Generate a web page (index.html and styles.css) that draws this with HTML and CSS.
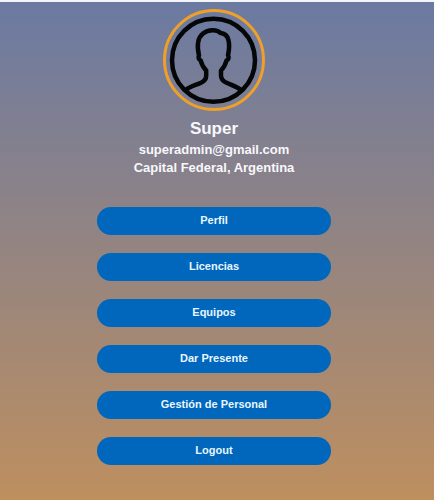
FILE: index.html
```html
<!DOCTYPE html>
<html lang="es">
<head>
<meta charset="utf-8">
<meta name="viewport" content="width=device-width, initial-scale=1">
<title>Perfil</title>
<link rel="stylesheet" href="styles.css">
</head>
<body>
<main class="page">
  <header class="profile">
    <svg class="avatar" viewBox="0 0 102 102" role="img" aria-label="Avatar">
      <circle class="ring" cx="51" cy="51" r="49.5"/>
      <g class="figure">
        <circle cx="50.5" cy="51.3" r="41.5"/>
        <path d="M22.7 81C27 77.5 33 76 38 73.7C42 72 43.2 70 43.2 66.5V61.5C40 58.5 38.6 55 37.7 51.5C35.5 50.5 35 48 36 46.5C34 38 34.5 29 40 24.500C45 20.500 54 20 57.5 24C66 24.500 67.5 34 65 46.5C66.5 48 65.5 50.5 63.5 51.5C62.6 55 61 58.5 58 61.5V66.5C58 70 59.5 72 63.5 73.7C68.5 76 74 77.5 78.3 81"/>
      </g>
    </svg>
    <h1 class="name">Super</h1>
    <p class="detail">superadmin@gmail.com</p>
    <p class="detail">Capital Federal, Argentina</p>
  </header>
  <nav class="menu" aria-label="Menú">
    <button type="button">Perfil</button>
    <button type="button">Licencias</button>
    <button type="button">Equipos</button>
    <button type="button">Dar Presente</button>
    <button type="button">Gestión de Personal</button>
    <button type="button">Logout</button>
  </nav>
</main>
</body>
</html>
```
FILE: styles.css
```css
* {
  box-sizing: border-box;
}

body {
  margin: 0;
  font-family: "Liberation Sans", Arial, sans-serif;
  font-weight: 700;
  color: #f8f8fc;
}

.page {
  display: flex;
  flex-direction: column;
  align-items: center;
  gap: 30px;
  min-height: 100vh;
  padding: 7px 6px 32px 0;
  border-top: 2px solid #f4f6fa;
  background: linear-gradient(#6b7aa2, #be8f5f);
}

.profile {
  display: flex;
  flex-direction: column;
  align-items: center;
}

.avatar {
  width: 102px;
  height: 102px;
  fill: none;
}

.ring {
  stroke: #f0a028;
  stroke-width: 3;
}

.figure {
  stroke: #050608;
  stroke-width: 4.5;
  stroke-linejoin: round;
}

.name {
  margin: 6px 0 0;
  font-size: 17px;
  line-height: 24px;
}

.detail {
  margin: 0;
  font-size: 13px;
  line-height: 18px;
}

.menu {
  display: flex;
  flex-direction: column;
  gap: 18px;
  width: 100%;
  max-width: 234px;
}

.menu button {
  height: 28px;
  padding: 0 14px 2px;
  border: 0;
  border-radius: 14px;
  background: #0067bc;
  color: #e8f6ff;
  font: inherit;
  font-size: 11px;
  line-height: 16px;
}
```
